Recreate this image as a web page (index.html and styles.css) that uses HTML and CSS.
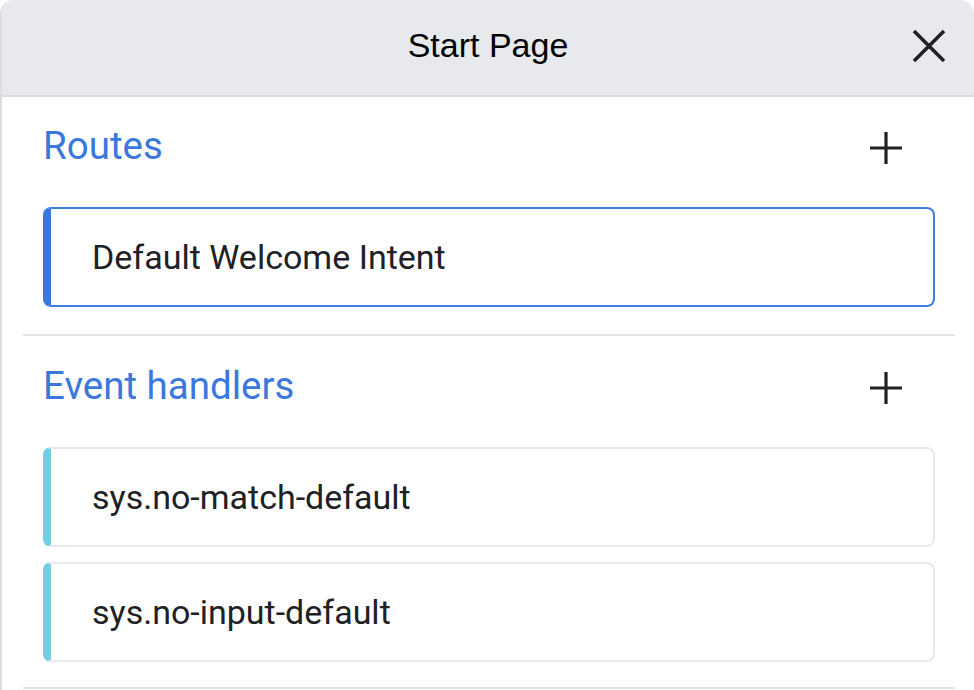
FILE: index.html
```html
<!DOCTYPE html>
<html>
<head>
<meta charset="utf-8">
<link rel="stylesheet" href="styles.css">
</head>
<body>
<div class="panel">
  <div class="header">
    <div></div>
    <div class="title">Start Page</div>
    <div class="close-wrap">
      <svg class="close" viewBox="0 0 36 36" width="36" height="36"><path d="M3 3 L33 33 M33 3 L3 33" stroke="#202124" stroke-width="3.6" fill="none"/></svg>
    </div>
  </div>
  <div class="section first">
    <div class="sec-head">
      <span class="sec-title">Routes</span>
      <svg class="plus" viewBox="0 0 34 34" width="34" height="34"><path d="M17 1 V33 M1 17 H33" stroke="#202124" stroke-width="3.2" fill="none"/></svg>
    </div>
    <div class="card route">Default Welcome Intent</div>
  </div>
  <div class="divider"></div>
  <div class="section">
    <div class="sec-head">
      <span class="sec-title">Event handlers</span>
      <svg class="plus" viewBox="0 0 34 34" width="34" height="34"><path d="M17 1 V33 M1 17 H33" stroke="#202124" stroke-width="3.2" fill="none"/></svg>
    </div>
    <div class="cards">
      <div class="card event">sys.no-match-default</div>
      <div class="card event">sys.no-input-default</div>
    </div>
  </div>
  <div class="divider"></div>
</div>
</body>
</html>
```
FILE: styles.css
```css
html, body {
  margin: 0;
  padding: 0;
  background: #ffffff;
}
body {
  font-family: Roboto, "Liberation Sans", sans-serif;
  overflow: hidden;
}
.panel {
  width: 974px;
  height: 690px;
  box-sizing: border-box;
  border-left: 2px solid #dcdde2;
  border-radius: 14px 14px 0 0;
  overflow: hidden;
  background: #fff;
}
.header {
  height: 95px;
  background: #e8e9ed;
  border-bottom: 2px solid #d9dadf;
  display: grid;
  grid-template-columns: 1fr auto 1fr;
  align-items: center;
}
.title {
  font-family: "Liberation Sans", Arial, sans-serif;
  font-size: 34px;
  color: #000;
  padding-bottom: 4px;
}
.close-wrap {
  display: flex;
  justify-content: flex-end;
  padding-right: 27px;
  padding-bottom: 4px;
}
.close {
  display: block;
}
.section {
  padding: 19px 39px 25px 41px;
}
.section.first {
  padding-top: 18px;
  padding-bottom: 27px;
}
.sec-head {
  height: 60px;
  display: flex;
  align-items: center;
  justify-content: space-between;
}
.sec-title {
  color: #3a78dd;
  font-size: 38.5px;
}
.plus {
  display: block;
  margin-right: 32px;
  margin-top: 5px;
}
.card {
  height: 100px;
  box-sizing: border-box;
  margin-top: 32px;
  border-radius: 8px;
  display: flex;
  align-items: center;
  padding-left: 41px;
  font-size: 34px;
  color: #202124;
}
.route {
  border: 2px solid #3f7ce0;
  border-left: 8px solid #3a76dc;
}
.cards {
  display: flex;
  flex-direction: column;
  gap: 15px;
  margin-top: 32px;
}
.cards .card {
  margin-top: 0;
}
.event {
  border: 2px solid #e8e9ec;
  border-left: 8px solid #74cde3;
}
.divider {
  height: 2px;
  background: #e2e2e4;
  margin: 0 19px 0 21px;
}
```
